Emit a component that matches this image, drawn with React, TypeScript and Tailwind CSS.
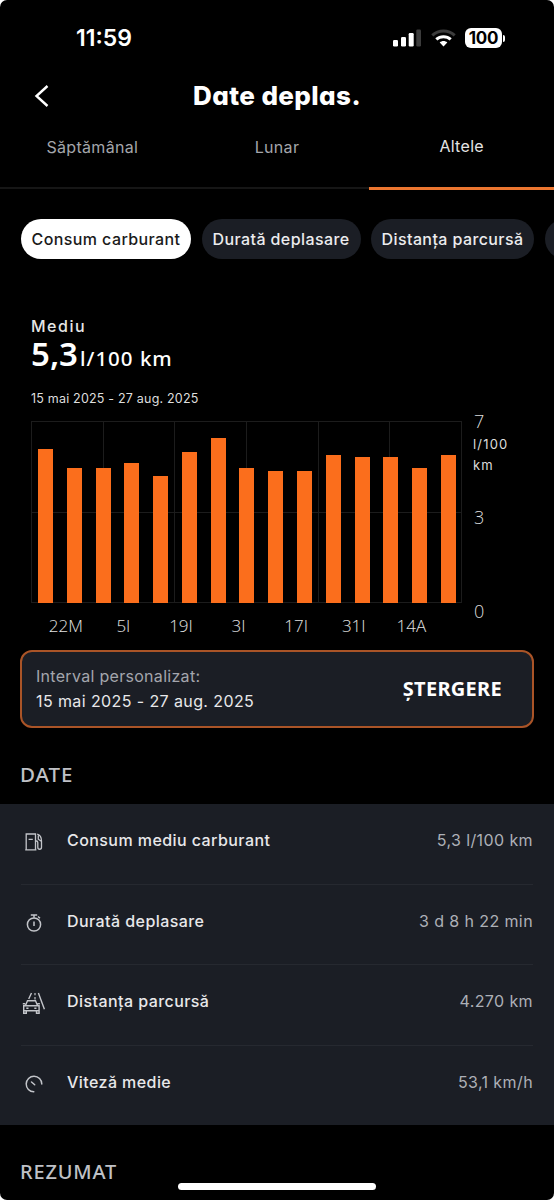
import React, { useState } from 'react';

const TABS = ['Săptămânal', 'Lunar', 'Altele'];

const CHIPS = [
  { label: 'Consum carburant', width: 'w-[170px]' },
  { label: 'Durată deplasare', width: 'w-[159px]' },
  { label: 'Distanța parcursă', width: 'w-[163px]' },
  { label: '', width: 'w-[130px]' },
];

// bar heights in px, the plot area is 181px high
const BARS = [154, 135, 135, 140.5, 127, 151, 165, 135, 132, 132, 148.5, 146, 146, 135, 148.5];

const X_LABELS = ['22M', '5I', '19I', '3I', '17I', '31I', '14A'];

function FuelIcon() {
  return (
    <svg width="18" height="18" viewBox="0 0 18 18" fill="none" stroke="#c3c5ca" strokeWidth="1.3">
      <path d="M1.2 17V1h9.300v16M0.200 16.800h11.200M3.600 6.400h4.200" />
      <path d="M10.500 8h.8c1 0 1.500.5 1.500 1.400v4.900c0 2.600 3.700 2.600 3.700 0V8c0-3.200-1.300-5.900-4.300-6.800M13.300 2.500v3.700l3 2" />
    </svg>
  );
}

function StopwatchIcon() {
  return (
    <svg width="18" height="20" viewBox="0 0 18 20" fill="none" stroke="#c3c5ca" strokeWidth="1.5">
      <circle cx="9" cy="11.500" r="6.600" />
      <path d="M5.800 2h6.400M9 2v2.800M13 3.500l2 1.800M9 8.500v4.500" />
    </svg>
  );
}

function RoadIcon() {
  return (
    <svg width="24" height="22" viewBox="0 0 24 22" fill="none" stroke="#c3c5ca" strokeWidth="1.400">
      <path d="M9.500 1 6.700 7M16.400 1l6 16.200" />
      <path d="M13 1v2.200M13 5v2.600" strokeWidth="1.200" />
      <path d="m3.500 13.500 2-4.800h8l2 4.800M1.700 13.700h15.400v5H1.700zM1.700 18.700v2.500h2.600v-2.500M14.500 18.700v2.500h2.600v-2.500M0.800 11.700h2.400M15.500 11.700h2.400M4.300 16.200h2.200M12.300 16.200h2.200" />
    </svg>
  );
}

function SpeedIcon() {
  return (
    <svg width="18" height="18" viewBox="0 0 18 18" fill="none" stroke="#c3c5ca" strokeWidth="1.500" strokeLinecap="round">
      <path d="M8.800 16.800A7.800 7.800 0 1 1 16.800 9M6.500 7l3.200 2.700" />
    </svg>
  );
}

const ROWS = [
  { icon: <FuelIcon />, label: 'Consum mediu carburant', value: '5,3 l/100 km' },
  { icon: <StopwatchIcon />, label: 'Durată deplasare', value: '3 d 8 h 22 min' },
  { icon: <RoadIcon />, label: 'Distanța parcursă', value: '4.270 km' },
  { icon: <SpeedIcon />, label: 'Viteză medie', value: '53,1 km/h' },
];

function StatusBar() {
  return (
    <div className="flex h-[76px] shrink-0 items-center justify-between pl-[76px] pr-[49px]">
      <span className="text-[23px] font-semibold">11:59</span>
      <div className="flex items-center">
        <svg width="28" height="18" viewBox="0 0 28 18" fill="white">
          <rect x="0" y="11" width="5" height="6.500" rx="1.200" />
          <rect x="8" y="8" width="5" height="9.500" rx="1.200" />
          <rect x="15.700" y="4" width="5" height="13.500" rx="1.200" />
          <rect x="23.300" y="0.500" width="4.700" height="17" rx="1.200" fill="#3c3c3c" />
        </svg>
        <svg className="ml-[10px]" width="25" height="18" viewBox="0 0 25 18" fill="none" strokeWidth="3">
          <path d="M1.300 6.400C7.500 0.600 17.500 0.600 23.700 6.400" stroke="#3c3c3c" />
          <path d="M5.300 10.400c4-3.700 10.400-3.700 14.400 0" stroke="white" />
          <path d="M8.700 13.600c2.200-2 5.400-2 7.600 0l-3.800 4z" fill="white" />
        </svg>
        <div className="ml-[9px] flex h-[20px] w-[37px] items-center justify-center rounded-[6px] bg-white text-[17px] font-bold leading-none tracking-[-0.2px] text-black">
          100
        </div>
        <div className="ml-px h-[7px] w-[2px] rounded-r-full bg-white" />
      </div>
    </div>
  );
}

function Chart() {
  return (
    <div className="mt-[13px] flex pl-[31px]">
      <div className="w-[431px]">
        <div className="relative h-[182px]">
          <div className="absolute inset-0 grid grid-cols-6 grid-rows-2 border-r border-b border-[#1c1c1c]">
            {Array.from({ length: 12 }, (_, i) => (
              <div key={i} className="border-t border-l border-[#1c1c1c]" />
            ))}
          </div>
          <div className="relative flex h-full items-end justify-between pr-[6px] pl-[7px]">
            {BARS.map((h, i) => (
              <div key={i} className="w-[15px] bg-[#fb6e1c]" style={{ height: h }} />
            ))}
          </div>
        </div>
        <div className="mt-[12px] flex h-[22px] items-center pl-[6px] font-['Open_Sans',sans-serif] text-[17px] font-light text-[#e2e2e2]">
          {X_LABELS.map((label) => (
            <span key={label} className="w-[57.6px] text-center">
              {label}
            </span>
          ))}
        </div>
      </div>
      <div className="-mt-[11px] ml-[11px] flex h-[214px] w-[50px] flex-col text-[#dcdcdc]">
        <span className="pl-px font-['Open_Sans',sans-serif] text-[18px] leading-[22px] font-light">7</span>
        <span className="mt-[2px] text-[13px] leading-[21px] tracking-[1.2px]">l/100 km</span>
        <span className="mt-[30px] pl-px font-['Open_Sans',sans-serif] text-[18px] leading-[22px] font-light">3</span>
        <span className="mt-[72px] pl-px font-['Open_Sans',sans-serif] text-[18px] leading-[22px] font-light">0</span>
      </div>
    </div>
  );
}

export default function App() {
  const [tab, setTab] = useState(2);
  const [chip, setChip] = useState(0);

  return (
    <div className="h-[1200px] w-[554px] bg-white font-['Inter',sans-serif] text-white">
      <div className="relative flex h-full flex-col overflow-hidden rounded-[7px] bg-black">
        <StatusBar />

        <header className="relative flex h-[40px] shrink-0 items-center justify-center">
          <button className="absolute left-[34px]" aria-label="Înapoi">
            <svg width="16" height="24" viewBox="0 0 16 24" fill="none" stroke="white" strokeWidth="2.400">
              <path d="M13.500 2 2.500 12l11 10" />
            </svg>
          </button>
          <h1 className="mb-px text-[26px] font-extrabold tracking-[0.4px] whitespace-nowrap [font-feature-settings:'cv11']">
            Date deplas.
          </h1>
        </header>

        <nav className="grid h-[74px] shrink-0 grid-cols-3 text-[16px] tracking-[0.3px]">
          {TABS.map((label, i) => (
            <button
              key={label}
              onClick={() => setTab(i)}
              className={`flex justify-center ${
                i === tab
                  ? 'border-b-[3px] border-[#ec7630] pt-[18px] text-[#e4e4e4]'
                  : 'mb-px border-b-2 border-[#161616] pt-[19px] text-[#a4a6ab]'
              }`}
            >
              {label}
            </button>
          ))}
        </nav>

        <div className="mt-[29px] flex shrink-0 gap-[10.500px] overflow-hidden pl-[21px] text-[16px] font-medium">
          {CHIPS.map((c, i) => (
            <button
              key={i}
              onClick={() => setChip(i)}
              className={`h-[40px] shrink-0 rounded-full tracking-[0.4px] whitespace-nowrap ${c.width} ${
                i === chip ? 'bg-white text-[#1a1a1a]' : 'bg-[#1b1e25] text-[#ececee]'
              }`}
            >
              {c.label}
            </button>
          ))}
        </div>

        <section className="mt-[57px] shrink-0 pl-[31px]">
          <p className="text-[16px] leading-[20px] font-medium tracking-[1.500px] text-[#e6e6e6]">Mediu</p>
          <p className="flex h-[36px] items-baseline gap-[2px] font-['Noto_Sans',sans-serif] leading-[36px]">
            <span className="text-[33px] font-semibold">5,3</span>
            <span className="text-[20.500px] font-medium tracking-[1px]">l/100 km</span>
          </p>
          <p className="mt-[18px] text-[12.500px] leading-[18px] tracking-[0.2px] text-[#dedede]">15 mai 2025 - 27 aug. 2025</p>
        </section>

        <Chart />

        <section className="mx-[20px] mt-[13px] flex h-[78px] shrink-0 items-center justify-between rounded-[12px] border-2 border-[#aa5427] bg-[#1b1e25] pr-[30px] pl-[14px]">
          <div className="text-[16px] leading-[25px] tracking-[0.400px]">
            <p className="tracking-[0.300px] text-[#a4a6ad]">Interval personalizat:</p>
            <p className="text-[#e8e8ea]">15 mai 2025 - 27 aug. 2025</p>
          </div>
          <button className="font-['Noto_Sans',sans-serif] text-[20px] font-bold tracking-[0.3px]">ȘTERGERE</button>
        </section>

        <h2 className="mt-[33px] ml-[20px] shrink-0 font-['Noto_Sans',sans-serif] text-[20.500px] leading-[26px] font-medium tracking-[1px] text-[#bfc1c6]">
          DATE
        </h2>

        <ul className="mt-[17px] h-[321px] shrink-0 bg-[#1b1e25] px-[21px]">
          {ROWS.map((row) => (
            <li
              key={row.label}
              className="flex h-[80.700px] items-start border-b border-[#262930] pt-[24px] text-[16px] leading-[24px] last:border-b-0"
            >
              <span className="mt-[1px] flex h-[26px] w-[26px] shrink-0 items-center justify-center">{row.icon}</span>
              <span className="ml-[20px] font-medium tracking-[0.430px] text-[#e8e8ea]">{row.label}</span>
              <span className="ml-auto tracking-[0.4px] text-[#adb0b7]">{row.value}</span>
            </li>
          ))}
        </ul>

        <h2 className="mt-[34px] ml-[20px] shrink-0 font-['Noto_Sans',sans-serif] text-[20px] leading-[26px] font-medium tracking-[0.8px] text-[#bfc1c6]">
          REZUMAT
        </h2>

        {/* home indicator */}
        <div className="absolute bottom-[10px] left-[178px] h-[7px] w-[198px] rounded-full bg-white" />
      </div>
    </div>
  );
}
